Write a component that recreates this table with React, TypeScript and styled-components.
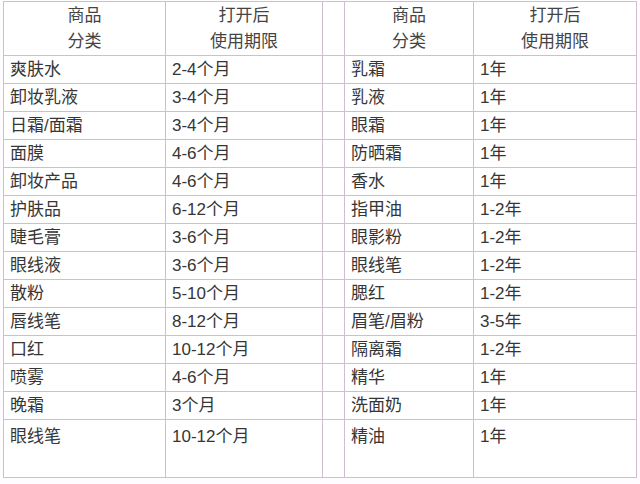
import React from 'react';
import styled, { createGlobalStyle } from 'styled-components';

const GlobalStyle = createGlobalStyle`
  body {
    margin: 0;
    background: #fefcfe;
    font-family: "Liberation Sans", "Noto Sans CJK SC", sans-serif;
  }
`;

const Page = styled.div`
  width: 640px;
  height: 484px;
  padding: 1px 0 0 3px;
  box-sizing: border-box;
`;

const Grid = styled.div`
  display: grid;
  grid-template-columns: 162px 157px 22px 129px 163px;
  grid-template-rows: 54px repeat(13, 28px) 58px;
  width: max-content;
  background: #fff;
  border-top: 1.5px solid #d3bcce;
  border-left: 1.5px solid #d3bcce;
  color: #363636;
  font-size: 17px;
`;

const Cell = styled.div<{ $tall?: boolean }>`
  display: flex;
  align-items: ${(p) => (p.$tall ? 'flex-start' : 'center')};
  padding: ${(p) => (p.$tall ? '5px 6px 0' : '1px 6px 0')};
  border-right: 1.5px solid #d3bcce;
  border-bottom: 1.5px solid #d3bcce;
  line-height: 24px;
  white-space: nowrap;
  box-sizing: border-box;
`;

const HeadCell = styled.div`
  display: flex;
  flex-direction: column;
  align-items: center;
  justify-content: center;
  border-right: 1.5px solid #d3bcce;
  border-bottom: 1.5px solid #d3bcce;
  line-height: 26px;
  color: #444;
  box-sizing: border-box;
`;

const rows: [string, string, string, string][] = [
  ['爽肤水', '2-4个月', '乳霜', '1年'],
  ['卸妆乳液', '3-4个月', '乳液', '1年'],
  ['日霜/面霜', '3-4个月', '眼霜', '1年'],
  ['面膜', '4-6个月', '防晒霜', '1年'],
  ['卸妆产品', '4-6个月', '香水', '1年'],
  ['护肤品', '6-12个月', '指甲油', '1-2年'],
  ['睫毛膏', '3-6个月', '眼影粉', '1-2年'],
  ['眼线液', '3-6个月', '眼线笔', '1-2年'],
  ['散粉', '5-10个月', '腮红', '1-2年'],
  ['唇线笔', '8-12个月', '眉笔/眉粉', '3-5年'],
  ['口红', '10-12个月', '隔离霜', '1-2年'],
  ['喷雾', '4-6个月', '精华', '1年'],
  ['晚霜', '3个月', '洗面奶', '1年'],
  ['眼线笔', '10-12个月', '精油', '1年'],
];

const Header = ({ top, bottom }: { top: string; bottom: string }) => (
  <HeadCell>
    <span>{top}</span>
    <span>{bottom}</span>
  </HeadCell>
);

const App = () => {
  return (
    <Page>
      <GlobalStyle />
      <Grid>
        <Header top="商品" bottom="分类" />
        <Header top="打开后" bottom="使用期限" />
        <HeadCell />
        <Header top="商品" bottom="分类" />
        <Header top="打开后" bottom="使用期限" />
        {rows.map((r, i) => {
          const tall = i === rows.length - 1;
          return (
            <React.Fragment key={i}>
              <Cell $tall={tall}>{r[0]}</Cell>
              <Cell $tall={tall}>{r[1]}</Cell>
              <Cell $tall={tall} />
              <Cell $tall={tall}>{r[2]}</Cell>
              <Cell $tall={tall}>{r[3]}</Cell>
            </React.Fragment>
          );
        })}
      </Grid>
    </Page>
  );
};

export default App;
